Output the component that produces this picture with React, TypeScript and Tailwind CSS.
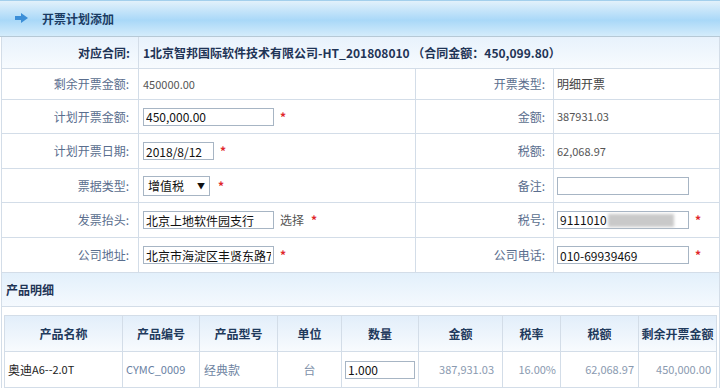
import type { ReactNode } from 'react'

const line = 'border-[#d3dde8]'

function Star({ ml = 'ml-[6px]' }: { ml?: string }) {
  return <span className={`${ml} text-[12px] font-bold leading-none text-[#e0262a]`}>*</span>
}

function Field({ w, value = '' }: { w: string; value?: string }) {
  return (
    <input
      readOnly
      defaultValue={value}
      className={`${w} h-[18px] shrink-0 border border-[#a7b5c4] bg-white px-[2px] py-0 text-[12px] leading-[16px] text-[#111] outline-none`}
    />
  )
}

function FormRow({
  h,
  label,
  left,
  rlabel,
  right,
}: {
  h: string
  label: string
  left: ReactNode
  rlabel: string
  right: ReactNode
}) {
  return (
    <div className={`flex ${h} border-b ${line}`}>
      <div className={`flex w-[137px] shrink-0 items-center justify-end border-r ${line} pr-[9px] text-[12px] text-[#5a6e8e]`}>
        {label}
      </div>
      <div className={`flex w-[277px] shrink-0 items-center border-r ${line} pl-[4px]`}>{left}</div>
      <div className={`flex w-[138px] shrink-0 items-center justify-end border-r ${line} pr-[8px] text-[12px] text-[#5a6e8e]`}>
        {rlabel}
      </div>
      <div className="flex flex-1 items-center pl-[3px]">{right}</div>
    </div>
  )
}

const columns = ['产品名称', '产品编号', '产品型号', '单位', '数量', '金额', '税率', '税额', '剩余开票金额']

export default function App() {
  return (
    <div className="h-[390px] w-[720px] overflow-hidden bg-white font-['Noto_Sans_CJK_SC',sans-serif]">
      {/* title bar */}
      <div className="flex h-[37px] items-center border-t border-b border-t-[#a3cfec] border-b-[#b6c9d6] bg-[linear-gradient(#e2f1fb,#a9d8f8_55%,#d4ecfb)] pl-[15px]">
        <svg width="13" height="10" viewBox="0 0 13 10" className="mt-[-2px]">
          <rect x="0" y="3" width="7" height="4" fill="#3b8ed7" />
          <polygon points="6,0 13,5 6,10" fill="#3b8ed7" />
        </svg>
        <span className="ml-[14px] text-[12px] font-bold text-[#1a3b63]">开票计划添加</span>
      </div>

      <div className={`ml-[1px] w-[719px] border-l border-r ${line}`}>
        {/* contract row */}
        <div className={`flex h-[32px] border-b ${line} bg-[linear-gradient(#e8f2fc,#f7fbfe)]`}>
          <div className={`flex w-[137px] shrink-0 items-center justify-end border-r ${line} pr-[8px] text-[12px] font-bold text-[#1f3456]`}>
            对应合同:
          </div>
          <div className="flex flex-1 items-center pl-[4px] text-[12px] font-bold text-[#1f3456]">
            1北京智邦国际软件技术有限公司-HT_201808010 （合同金额：450,099.80）
          </div>
        </div>

        <FormRow
          h="h-[31px]"
          label="剩余开票金额:"
          left={<span className="text-[11px] text-[#555]">450000.00</span>}
          rlabel="开票类型:"
          right={<span className="text-[12px] text-[#444]">明细开票</span>}
        />
        <FormRow
          h="h-[34px]"
          label="计划开票金额:"
          left={
            <>
              <Field w="w-[131px]" value="450,000.00" />
              <Star />
            </>
          }
          rlabel="金额:"
          right={<span className="text-[11px] text-[#555]">387931.03</span>}
        />
        <FormRow
          h="h-[35px]"
          label="计划开票日期:"
          left={
            <>
              <Field w="w-[71px]" value="2018/8/12" />
              <Star />
            </>
          }
          rlabel="税额:"
          right={<span className="text-[11px] text-[#555]">62,068.97</span>}
        />
        <FormRow
          h="h-[34px]"
          label="票据类型:"
          left={
            <>
              <div className="flex h-[20px] w-[67px] items-center justify-between border border-[#a7b5c4] bg-white pl-[4px] pr-[4px] text-[12px] text-[#111]">
                <span>增值税</span>
                <span className="text-[8px]">▼</span>
              </div>
              <Star ml="ml-[8px]" />
            </>
          }
          rlabel="备注:"
          right={<Field w="w-[132px]" />}
        />
        <FormRow
          h="h-[35px]"
          label="发票抬头:"
          left={
            <>
              <Field w="w-[131px]" value="北京上地软件园支行" />
              <span className="ml-[6px] text-[12px] text-[#555]">选择</span>
              <Star ml="ml-[7px]" />
            </>
          }
          rlabel="税号:"
          right={
            <>
              <div className="flex h-[18px] w-[132px] shrink-0 items-center border border-[#a7b5c4] bg-white px-[2px] text-[12px] text-[#111]">
                9111010
                <span className="ml-[1px] h-[13px] w-[66px] bg-[#c9c9c9] blur-[1.5px]" />
              </div>
              <Star />
            </>
          }
        />
        <FormRow
          h="h-[35px]"
          label="公司地址:"
          left={
            <>
              <Field w="w-[131px]" value="北京市海淀区丰贤东路7号院" />
              <Star />
            </>
          }
          rlabel="公司电话:"
          right={
            <>
              <Field w="w-[132px]" value="010-69939469" />
              <Star />
            </>
          }
        />

        {/* product section */}
        <div className={`flex h-[34px] items-center border-b ${line} bg-[linear-gradient(#e3f0fb,#f4f9fe)] pl-[4px] text-[12px] font-bold text-[#1f3456]`}>
          产品明细
        </div>
        <div className="h-[8px]" />
        <div className={`mx-[2px] grid grid-cols-[118px_77px_78px_64px_77px_84px_58px_78px_1fr] border-l border-t ${line}`}>
          {columns.map((c) => (
            <div
              key={c}
              className={`flex h-[36px] items-center justify-center border-r border-b ${line} bg-[linear-gradient(#e2eefa,#f8fbfe)] text-[12px] font-bold text-[#1f3a5c]`}
            >
              {c}
            </div>
          ))}
          <div className={`flex h-[36px] items-center border-r border-b ${line} pl-[3px] text-[12px] text-[#222]`}>
            奥迪<span className="text-[11px]">A6--2.0T</span>
          </div>
          <div className={`flex items-center border-r border-b ${line} pl-[3px] text-[11px] text-[#6a82a4]`}>CYMC_0009</div>
          <div className={`flex items-center border-r border-b ${line} pl-[4px] text-[12px] text-[#6e84a2]`}>经典款</div>
          <div className={`flex items-center justify-center border-r border-b ${line} text-[12px] text-[#7d8fa8]`}>台</div>
          <div className={`flex items-center border-r border-b ${line} pl-[3px]`}>
            <Field w="w-[70px]" value="1.000" />
          </div>
          <div className={`flex items-center justify-end border-r border-b ${line} pr-[8px] text-[11px] text-[#8a9ab0]`}>387,931.03</div>
          <div className={`flex items-center justify-end border-r border-b ${line} pr-[4px] text-[11px] text-[#8a9ab0]`}>16.00%</div>
          <div className={`flex items-center justify-end border-r border-b ${line} pr-[4px] text-[11px] text-[#8a9ab0]`}>62,068.97</div>
          <div className={`flex items-center justify-end border-r border-b ${line} pr-[5px] text-[11px] text-[#8a9ab0]`}>450,000.00</div>
        </div>
      </div>
    </div>
  )
}
